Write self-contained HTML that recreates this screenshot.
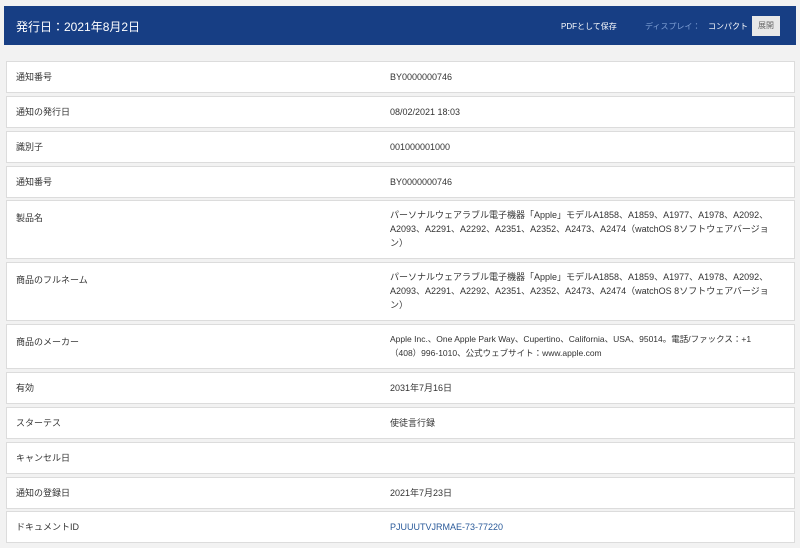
<!DOCTYPE html>
<html><head><meta charset="utf-8"><style>
*{margin:0;padding:0;box-sizing:border-box}
body{width:800px;height:548px;background:#f2f2f2;font-family:"Liberation Sans","Noto Sans CJK JP",sans-serif;color:#333;position:relative;overflow:hidden}
.hd{position:absolute;left:4px;top:6px;width:792px;height:39px;background:#173e84;color:#fff}
.hd .t{position:absolute;left:12px;top:12px;font-size:12px}
.hd .pdf{position:absolute;left:557px;top:15px;font-size:8px}
.hd .ds{position:absolute;left:641px;top:15px;font-size:8px;color:#7f9fd4}
.hd .cp{position:absolute;left:704px;top:15px;font-size:8px}
.hd .bt{position:absolute;left:748px;top:10px;width:28px;height:20px;background:#e8e8e8;color:#666;font-size:8px;text-align:center;line-height:20px}
.r{position:absolute;left:6px;width:789px;background:#fff;border:1px solid #dcdcdc;font-size:9px}
.r .l{position:absolute;left:9px;top:10px}
.r .v{position:absolute;left:383px;top:10px;width:392px;line-height:14px}
.r.s .l,.r.s .v{top:50%;margin-top:-6px;line-height:12px}
a{color:#2a5a9a;text-decoration:none}
</style></head><body>
<div class="hd"><div class="t">発行日：2021年8月2日</div><div class="pdf">PDFとして保存</div><div class="ds">ディスプレイ：</div><div class="cp">コンパクト</div><div class="bt">展開</div></div>
<div class="r s" style="top:61px;height:32px"><div class="l">通知番号</div><div class="v">BY0000000746</div></div>
<div class="r s" style="top:96px;height:32px"><div class="l">通知の発行日</div><div class="v">08/02/2021 18:03</div></div>
<div class="r s" style="top:131px;height:32px"><div class="l">識別子</div><div class="v">001000001000</div></div>
<div class="r s" style="top:166px;height:32px"><div class="l">通知番号</div><div class="v">BY0000000746</div></div>
<div class="r" style="top:200px;height:59px"><div class="l">製品名</div><div class="v" style="top:7px">パーソナルウェアラブル電子機器「Apple」モデルA1858、A1859、A1977、A1978、A2092、A2093、A2291、A2292、A2351、A2352、A2473、A2474（watchOS 8ソフトウェアバージョン）</div></div>
<div class="r" style="top:262px;height:59px"><div class="l">商品のフルネーム</div><div class="v" style="top:7px">パーソナルウェアラブル電子機器「Apple」モデルA1858、A1859、A1977、A1978、A2092、A2093、A2291、A2292、A2351、A2352、A2473、A2474（watchOS 8ソフトウェアバージョン）</div></div>
<div class="r" style="top:324px;height:45px"><div class="l">商品のメーカー</div><div class="v" style="top:7px;font-size:8.5px">Apple Inc.、One Apple Park Way、Cupertino、California、USA、95014。電話/ファックス：+1<br>（408）996-1010、公式ウェブサイト：www.apple.com</div></div>
<div class="r s" style="top:372px;height:32px"><div class="l">有効</div><div class="v">2031年7月16日</div></div>
<div class="r s" style="top:407px;height:32px"><div class="l">スターテス</div><div class="v">使徒言行録</div></div>
<div class="r s" style="top:442px;height:32px"><div class="l">キャンセル日</div><div class="v"></div></div>
<div class="r s" style="top:477px;height:32px"><div class="l">通知の登録日</div><div class="v">2021年7月23日</div></div>
<div class="r s" style="top:511px;height:32px"><div class="l">ドキュメントID</div><div class="v"><a>PJUUUTVJRMAE-73-77220</a></div></div>
</body></html>
